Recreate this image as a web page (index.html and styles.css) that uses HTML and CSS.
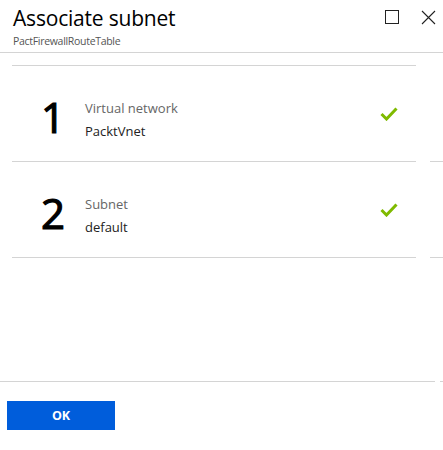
FILE: index.html
```html
<!DOCTYPE html>
<html>
<head>
<meta charset="utf-8">
<link rel="stylesheet" href="styles.css">
</head>
<body>
<div class="blade">
  <header class="head">
    <div class="titles">
      <h1 class="title">Associate subnet</h1>
      <div class="subtitle">PactFirewallRouteTable</div>
    </div>
    <div class="controls">
      <svg class="ctl" width="15" height="15" viewBox="0 0 15 15"><rect x="0.5" y="0.5" width="13" height="13" fill="none" stroke="#222" stroke-width="1"/></svg>
      <svg class="ctl" width="15" height="15" viewBox="0 0 15 15"><path d="M1 1 L14 14 M14 1 L1 14" stroke="#222" stroke-width="1.1" fill="none"/></svg>
    </div>
  </header>
  <main class="content">
    <div class="steps">
      <div class="step">
        <div class="num">1</div>
        <div class="info">
          <div class="label">Virtual network</div>
          <div class="value">PacktVnet</div>
        </div>
        <svg class="check" width="18" height="14" viewBox="0 0 18 14"><path d="M1.5 7 L6.5 12 L16.5 1.5" fill="none" stroke="#7fba00" stroke-width="3"/></svg>
      </div>
      <div class="step">
        <div class="num">2</div>
        <div class="info">
          <div class="label">Subnet</div>
          <div class="value">default</div>
        </div>
        <svg class="check" width="18" height="14" viewBox="0 0 18 14"><path d="M1.5 7 L6.5 12 L16.5 1.5" fill="none" stroke="#7fba00" stroke-width="3"/></svg>
      </div>
    </div>
  </main>
  <footer class="foot">
    <button class="ok">OK</button>
  </footer>
</div>
</body>
</html>
```
FILE: styles.css
```css
html, body {
  margin: 0;
  padding: 0;
  background: #fff;
}
body {
  font-family: "Open Sans", "Noto Sans", "Liberation Sans", sans-serif;
  color: #000;
}
.blade {
  width: 443px;
  height: 450px;
  display: flex;
  flex-direction: column;
  overflow: hidden;
}
.head {
  height: 53px;
  box-sizing: border-box;
  border-bottom: 1px solid #d4d4d4;
  display: flex;
  justify-content: space-between;
  padding: 0 7px 0 13px;
}
.titles {
  padding-top: 5px;
}
.title {
  margin: 0;
  font-size: 21px;
  font-weight: 400;
  line-height: 26px;
  letter-spacing: -0.2px;
}
.subtitle {
  font-size: 10.5px;
  color: #555;
  line-height: 14px;
  margin-top: 3px;
  letter-spacing: -0.3px;
}
.controls {
  display: flex;
  gap: 21px;
  padding-top: 10px;
}
.ctl {
  display: block;
}
.content {
  flex: 1;
  padding: 12px 0 0 12px;
}
.steps {
  width: 404px;
  border-top: 1px solid #d4d4d4;
}
.step {
  height: 95px;
  border-bottom: 1px solid #d4d4d4;
  display: flex;
  align-items: flex-start;
  padding: 0 18px 0 29px;
  position: relative;
}
.step::after {
  content: "";
  position: absolute;
  left: 418px;
  bottom: -1px;
  width: 13px;
  border-bottom: 1px solid #d4d4d4;
}
.num {
  font-size: 42px;
  line-height: 42px;
  font-weight: 400;
  -webkit-text-stroke: 1.2px #000;
  width: 44px;
  margin-top: 30px;
  color: #000;
}
.info {
  flex: 1;
  margin-top: 34px;
}
.label {
  font-size: 13px;
  color: #666;
  line-height: 16px;
}
.value {
  font-size: 13px;
  color: #222;
  line-height: 16px;
  margin-top: 7px;
}
.check {
  display: block;
  align-self: center;
  margin-top: 1px;
}
.foot {
  height: 69px;
  box-sizing: border-box;
  border-top: 1px solid #d4d4d4;
  padding: 19px 0 0 7px;
  position: relative;
}
.foot::after {
  content: "";
  position: absolute;
  right: 0;
  top: -1px;
  width: 8px;
  height: 1px;
  background: #fff;
}
.foot::before {
  content: "";
  position: absolute;
  right: 0;
  top: -1px;
  width: 3px;
  height: 1px;
  background: #d4d4d4;
  z-index: 1;
}
.ok {
  width: 108px;
  height: 29px;
  border: 0;
  background: #005ddb;
  color: #fff;
  font-family: "Open Sans", "Noto Sans", sans-serif;
  font-weight: 700;
  font-size: 12.5px;
  padding: 0;
}
```
